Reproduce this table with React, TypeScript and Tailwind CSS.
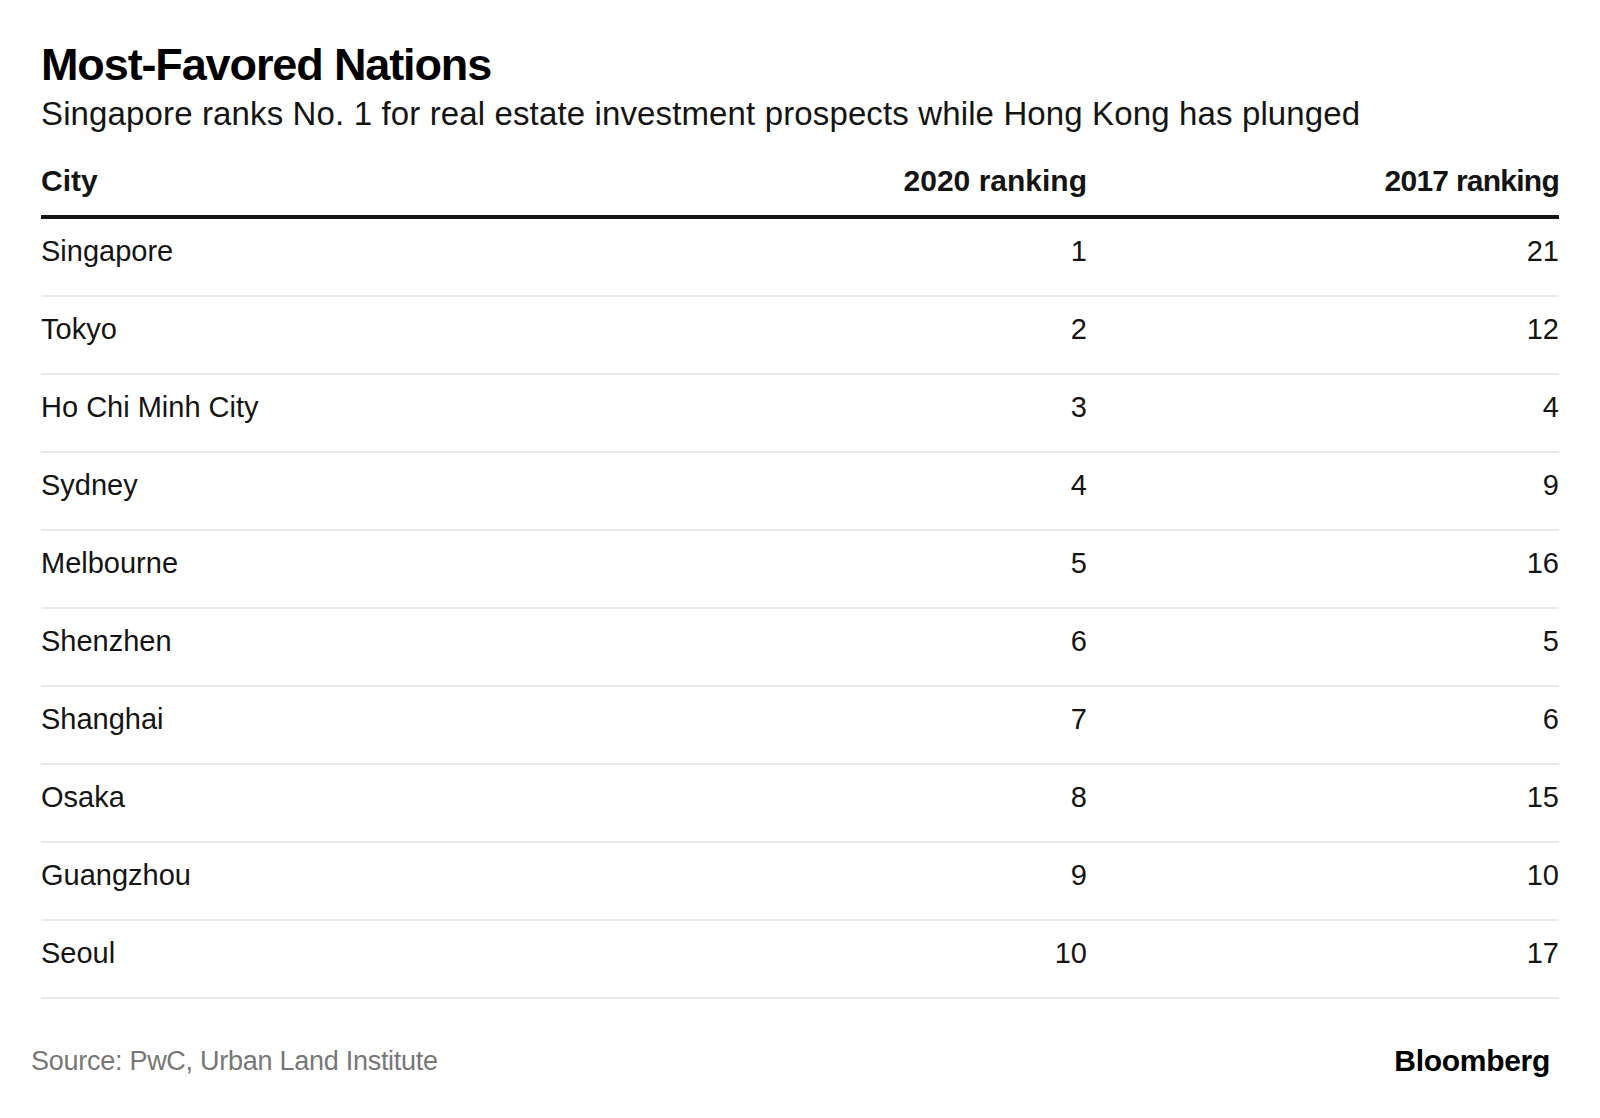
const rows: [string, number, number][] = [
  ["Singapore", 1, 21],
  ["Tokyo", 2, 12],
  ["Ho Chi Minh City", 3, 4],
  ["Sydney", 4, 9],
  ["Melbourne", 5, 16],
  ["Shenzhen", 6, 5],
  ["Shanghai", 7, 6],
  ["Osaka", 8, 15],
  ["Guangzhou", 9, 10],
  ["Seoul", 10, 17],
];

export default function App() {
  return (
    <div
      className="w-[1600px] h-[1118px] bg-white text-[#141414]"
      style={{ fontFamily: '"Liberation Sans", Arial, sans-serif' }}
    >
      <div className="pl-[41px] pr-[41px] pt-[39px]">
        <h1 className="text-[45px] leading-[52px] font-bold tracking-[-0.025em] text-black">
          Most-Favored Nations
        </h1>
        <p className="mt-[3px] text-[33px] leading-[40px] tracking-[0.004em]">
          Singapore ranks No. 1 for real estate investment prospects while Hong Kong has plunged
        </p>

        {/* header */}
        <div className="mt-[29px] grid grid-cols-[1fr_300px_472px] pb-[16px] border-b-[4px] border-[#141414] text-[30px] leading-[36px] font-bold">
          <div>City</div>
          <div className="text-right">2020 ranking</div>
          <div className="text-right tracking-[-0.025em]">2017 ranking</div>
        </div>

        {rows.map(([city, a, b]) => (
          <div
            key={city}
            className="grid grid-cols-[1fr_300px_472px] h-[78px] pt-[15px] border-b-2 border-[#e8e8e8] text-[29px] leading-[34px]"
          >
            <div>{city}</div>
            <div className="text-right">{a}</div>
            <div className="text-right">{b}</div>
          </div>
        ))}
      </div>

      {/* footer */}
      <div className="mt-[46px] flex items-start justify-between pl-[31px] pr-[50px]">
        <div className="text-[27px] leading-[32px] tracking-[-0.01em] text-[#777777]">
          Source: PwC, Urban Land Institute
        </div>
        <div className="text-[30px] leading-[32px] font-bold tracking-[-0.01em] text-black">
          Bloomberg
        </div>
      </div>
    </div>
  );
}
